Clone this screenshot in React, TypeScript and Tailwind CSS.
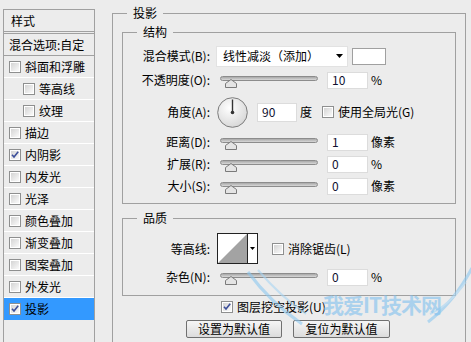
import React from 'react'

const font = { fontFamily: '"Noto Sans CJK SC", "Microsoft YaHei", "Liberation Sans", sans-serif' }

function Check({ on = false }: { on?: boolean }) {
  return (
    <svg width="12" height="12" viewBox="0 0 12 12" className="shrink-0">
      <defs>
        <linearGradient id="cbg" x1="0" y1="0" x2="1" y2="1">
          <stop offset="0" stopColor="#d4d4d4" />
          <stop offset="1" stopColor="#fafafa" />
        </linearGradient>
      </defs>
      <rect x="0.5" y="0.5" width="11" height="11" fill="#fff" stroke="#8e8f8f" />
      <rect x="2" y="2" width="8" height="8" fill="url(#cbg)" />
      {on && <path d="M3 5.8 L5 8 L9.2 2.8" fill="none" stroke="#3d4f9a" strokeWidth="1.6" />}
    </svg>
  )
}

function Slider() {
  return (
    <div className="relative w-[98px] h-[12px] mt-[4px] ml-[10px]">
      <div className="h-[5px] rounded-full border border-[#8c8c8c] bg-linear-to-b from-[#a8a8a8] to-[#d8d8d8]" />
      <svg width="12" height="9" viewBox="0 0 12 9" className="absolute left-[5px] top-[3px]">
        <path d="M0.5 8.5 L0.5 4.5 L6 0.5 L11.5 4.5 L11.5 8.5 Z" fill="#e4e4e4" stroke="#7a7a7a" />
      </svg>
    </div>
  )
}

function Field({ value, w = 'w-[41px]', h = 'h-[17px]' }: { value: string; w?: string; h?: string }) {
  return (
    <div className={`${w} ${h} bg-white border border-[#dcdcdc] flex items-center pl-[4px] text-[12px] leading-[14px] text-[#101030]`}>
      {value}
    </div>
  )
}

function Label({ children }: { children: React.ReactNode }) {
  return <span className="w-[87px] text-right shrink-0 leading-[16px]">{children}</span>
}

function SliderRow({ label, value, unit }: { label: string; value: string; unit: string }) {
  return (
    <div className="flex items-center h-[22px]">
      <Label>{label}</Label>
      <Slider />
      <div className="ml-[9px]">
        <Field value={value} />
      </div>
      <span className="ml-[3px] leading-[16px]">{unit}</span>
    </div>
  )
}

const styles: { name: string; on?: boolean; indent?: boolean; active?: boolean }[] = [
  { name: '斜面和浮雕' },
  { name: '等高线', indent: true },
  { name: '纹理', indent: true },
  { name: '描边' },
  { name: '内阴影', on: true },
  { name: '内发光' },
  { name: '光泽' },
  { name: '颜色叠加' },
  { name: '渐变叠加' },
  { name: '图案叠加' },
  { name: '外发光' },
  { name: '投影', on: true, active: true },
]

function Button({ children, w }: { children: React.ReactNode; w: string }) {
  return (
    <div className={`${w} h-[18px] rounded-[2px] border border-[#707070] bg-linear-to-b from-[#f6f6f6] to-[#dcdcdc] flex items-center justify-center leading-[16px]`}>
      {children}
    </div>
  )
}

export default function App() {
  return (
    <div style={font} className="relative w-[471px] h-[342px] overflow-hidden bg-[#ececec] text-[12px] text-black flex items-start pl-[3px]">
      {/* style list */}
      <div className="w-[92px] h-[333px] mt-[9px] border-x border-t border-[#a0a0a0] flex flex-col shrink-0">
        <div className="h-[22px] border-b border-[#a0a0a0] flex items-center pl-[7px] leading-[16px]">样式</div>
        <div className="mt-[1px] border-t border-[#a0a0a0]">
          <div className="h-[22px] border-b border-[#a0a0a0] flex items-center pl-[5px] leading-[16px]">混合选项:自定</div>
          {styles.map((s) => (
            <div
              key={s.name}
              className={`h-[22px] flex items-center gap-[4px] border-b ${s.active ? 'bg-[#3399ff] border-[#3399ff]' : 'border-white'} ${s.indent ? 'pl-[19px]' : 'pl-[5px]'}`}
            >
              <Check on={s.on} />
              <span className="leading-[16px]">{s.name}</span>
            </div>
          ))}
        </div>
      </div>

      {/* drop shadow panel */}
      <fieldset className="ml-[17px] mt-[5px] w-[354px] h-[400px] border border-[#a0a0a0] px-[9px] pt-[3px] shrink-0">
        <legend className="ml-[5px] px-[6px] leading-[16px]">投影</legend>

        <fieldset className="w-[334px] border border-[#a0a0a0] pt-[5px] pb-[6px]">
          <legend className="ml-[14px] px-[6px] leading-[16px]">结构</legend>

          <div className="flex items-center h-[22px]">
            <Label>混合模式(B):</Label>
            <div className="ml-[6px] w-[132px] h-[21px] bg-white border border-[#e2e2e2] flex items-center justify-between pl-[6px] pr-[4px]">
              <span className="leading-[16px]">线性减淡（添加）</span>
              <svg width="7" height="4" viewBox="0 0 7 4">
                <path d="M0 0 H7 L3.5 4 Z" fill="#000" />
              </svg>
            </div>
            <div className="ml-[4px] w-[34px] h-[17px] bg-white border border-[#a0a0a0]" />
          </div>

          <div className="mt-[2px]">
            <SliderRow label="不透明度(O):" value="10" unit="%" />
          </div>

          <div className="mt-[4px] flex items-center h-[34px]">
            <Label>角度(A):</Label>
            <svg width="31" height="31" viewBox="0 0 31 31" className="ml-[7px] shrink-0">
              <defs>
                <radialGradient id="dial" cx="0.4" cy="0.35" r="0.7">
                  <stop offset="0" stopColor="#ffffff" />
                  <stop offset="1" stopColor="#d6d6d6" />
                </radialGradient>
              </defs>
              <circle cx="15.5" cy="15.5" r="14.8" fill="url(#dial)" stroke="#7c7c7c" />
              <line x1="15.5" y1="2.5" x2="15.5" y2="15.5" stroke="#333" strokeWidth="1.4" />
              <circle cx="15.5" cy="15.5" r="1.8" fill="#333" />
            </svg>
            <div className="ml-[9px]">
              <Field value="90" w="w-[40px]" h="h-[19px]" />
            </div>
            <span className="ml-[3px] leading-[16px]">度</span>
            <div className="ml-[10px] flex items-center gap-[4px]">
              <Check />
              <span className="leading-[16px]">使用全局光(G)</span>
            </div>
          </div>

          <div className="mt-[2px]">
            <SliderRow label="距离(D):" value="1" unit="像素" />
            <SliderRow label="扩展(R):" value="0" unit="%" />
            <SliderRow label="大小(S):" value="0" unit="像素" />
          </div>
        </fieldset>

        <fieldset className="mt-[6px] w-[334px] border border-[#a0a0a0] pt-[7px] pb-[7px]">
          <legend className="ml-[14px] px-[6px] leading-[16px]">品质</legend>

          <div className="flex items-center h-[31px]">
            <Label>等高线:</Label>
            <div className="ml-[7px] w-[41px] h-[31px] border border-[#222] bg-white flex">
              <svg width="29" height="29" viewBox="0 0 29 29" className="shrink-0">
                <rect width="29" height="29" fill="#fff" />
                <path d="M0 29 L29 0 V29 Z" fill="#a3a3a3" />
              </svg>
              <div className="flex-1 border-l border-[#222] flex items-center justify-center">
                <svg width="5" height="3" viewBox="0 0 5 3">
                  <path d="M0 0 H5 L2.5 3 Z" fill="#000" />
                </svg>
              </div>
            </div>
            <div className="ml-[14px] flex items-center gap-[4px]">
              <Check />
              <span className="leading-[16px]">消除锯齿(L)</span>
            </div>
          </div>

          <div className="mt-[2px]">
            <SliderRow label="杂色(N):" value="0" unit="%" />
          </div>
        </fieldset>

        <div className="mt-[1px] h-[20px] ml-[99px] flex items-center gap-[4px]">
          <Check on />
          <span className="leading-[16px]">图层挖空投影(U)</span>
        </div>

        <div className="mt-[3px] ml-[64px] flex gap-[11px]">
          <Button w="w-[96px]">设置为默认值</Button>
          <Button w="w-[97px]">复位为默认值</Button>
        </div>
      </fieldset>

      {/* site watermark */}
      <svg width="240" height="80" viewBox="0 0 240 80" className="absolute left-[240px] top-[262px] pointer-events-none opacity-60">
        <path d="M8 10 Q30 40 62 62" fill="none" stroke="#8cc8f0" strokeWidth="3" />
        <path d="M18 8 Q40 34 66 52" fill="none" stroke="#a8d6f4" strokeWidth="2" />
        <path d="M232 6 Q214 40 188 60" fill="none" stroke="#8cc8f0" strokeWidth="3" />
        <path d="M226 20 Q208 44 190 52" fill="none" stroke="#a8d6f4" strokeWidth="2" />
      </svg>
      <div className="absolute left-[323px] top-[292px] text-[21px] font-bold leading-[24px] text-[#7fc0ee] opacity-60 pointer-events-none tracking-[-1px]">
        我爱IT技术网
      </div>
    </div>
  )
}
